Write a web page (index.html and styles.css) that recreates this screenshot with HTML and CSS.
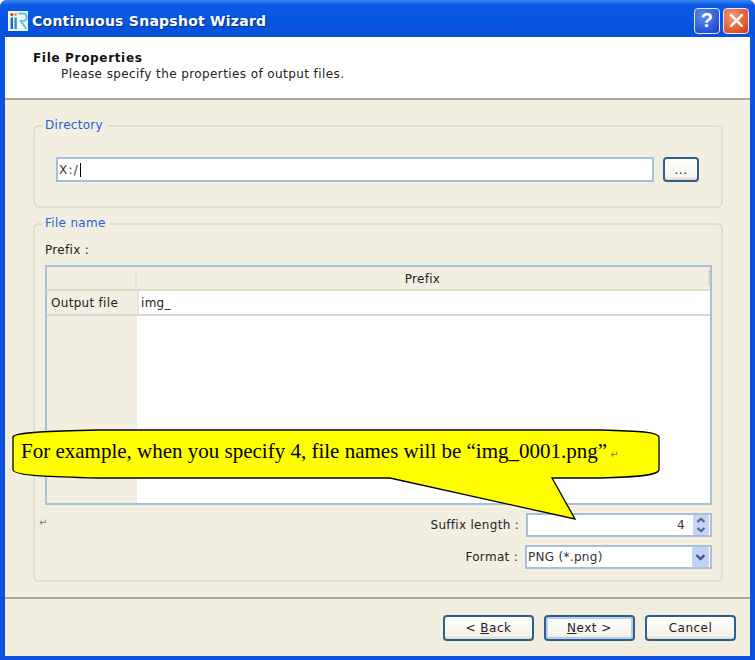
FILE: index.html
```html
<!DOCTYPE html>
<html lang="en">
<head>
<meta charset="utf-8">
<title>Continuous Snapshot Wizard</title>
<link rel="stylesheet" href="styles.css">
</head>
<body>
<div class="window">
  <div class="titlebar">
    <svg class="logo" viewBox="0 0 20 20" width="20" height="20">
      <rect width="20" height="20" fill="#eef8fb"/>
      <circle cx="3.800" cy="3.500" r="1.500" fill="#d8322c"/>
      <rect x="2.600" y="6.500" width="2.400" height="11.500" fill="#24649f"/>
      <circle cx="7.500" cy="3.500" r="1.300" fill="#e8803c"/>
      <rect x="6.400" y="6.500" width="2.400" height="11.500" fill="#2f8fb8"/>
      <path d="M10.500 2.500h4.500a3.800 3.800 0 0 1 .8 7.500h-3l5.700 8" fill="none" stroke="#62c8e0" stroke-width="2"/>
    </svg>
    <span class="title">Continuous Snapshot Wizard</span>
    <span class="caption-btn help">?</span>
    <span class="caption-btn close">
      <svg viewBox="0 0 14 14" width="15" height="15"><path d="M2 2L12 12M12 2L2 12" stroke="#fff" stroke-width="2.400" stroke-linecap="round"/></svg>
    </span>
  </div>
  <div class="client">
    <header class="head">
      <h1 class="head-title">File Properties</h1>
      <p class="head-sub">Please specify the properties of output files.</p>
    </header>
    <main class="body">
      <fieldset class="group group-dir">
        <legend class="legend">Directory</legend>
        <div class="dir-row">
          <div class="field dir-field">X:/<span class="caret"></span></div>
          <button class="btn btn-browse" type="button">...</button>
        </div>
      </fieldset>
      <fieldset class="group group-file">
        <legend class="legend">File name</legend>
        <div class="prefix-label">Prefix :</div>
        <div class="table">
          <div class="t-row t-head">
            <div class="t-side"></div>
            <div class="t-col">Prefix</div>
          </div>
          <div class="t-row t-data">
            <div class="t-side">Output file</div>
            <div class="t-cell">img_</div>
          </div>
          <div class="t-row t-fill">
            <div class="t-side"></div>
            <div class="t-blank"></div>
          </div>
        </div>
        <div class="form-row row-suffix">
          <span class="form-label">Suffix length :</span>
          <div class="field num-field">
            <span class="num-val">4</span>
            <span class="spin">
              <svg viewBox="0 0 16 20" width="16" height="20">
                <rect width="16" height="20" rx="2" fill="#c3d4f7"/>
                <path d="M4.500 7L8 3.800L11.500 7M4.500 13L8 16.200L11.500 13" fill="none" stroke="#4d6185" stroke-width="2"/>
              </svg>
            </span>
          </div>
        </div>
        <div class="form-row row-format">
          <span class="form-label">Format :</span>
          <div class="field sel-field">
            <span class="sel-val">PNG (*.png)</span>
            <span class="drop">
              <svg viewBox="0 0 17 20" width="17" height="20">
                <rect width="17" height="20" rx="2" fill="#c0d2f6"/>
                <path d="M4.500 8L8.500 12L12.500 8" fill="none" stroke="#3f5480" stroke-width="2.400"/>
              </svg>
            </span>
          </div>
        </div>
      </fieldset>
    </main>
    <footer class="foot">
      <button class="btn btn-nav" type="button">&lt; <u>B</u>ack</button>
      <button class="btn btn-nav btn-default" type="button"><u>N</u>ext &gt;</button>
      <button class="btn btn-nav" type="button">Cancel</button>
    </footer>
  </div>
  <span class="para-mark mark-a">↵</span>
  <div class="callout">
    <svg class="callout-shape" viewBox="0 0 660 100" width="660" height="100">
      <path d="M99 9C55 10 14 11 13 16L13 49C14 55 55 56 99 57L390 57L575 98L552 57L600 57C640 56 658 54 659 49L659 16C658 11 640 10 600 9Z" fill="#ffff00" stroke="#000" stroke-width="1.300"/>
    </svg>
    <p class="callout-text">For example, when you specify 4, file names will be “img_0001.png”<span class="para-mark mark-b">↵</span></p>
  </div>
</div>
</body>
</html>
```
FILE: styles.css
```css
* { box-sizing: border-box; }
html, body { margin: 0; padding: 0; }
body { width: 755px; height: 660px; overflow: hidden; background: #fff; font-family: "DejaVu Sans", sans-serif; font-size: 12px; letter-spacing: 0.3px; color: #222; }
.window { position: relative; width: 755px; height: 660px; display: flex; flex-direction: column; background: #0a52e0; border-radius: 7px 7px 0 0; }
.titlebar { height: 37px; flex: none; display: flex; align-items: center; padding: 4px 6px 0 8px; border-radius: 7px 7px 0 0; background: linear-gradient(#3a8af4 0, #0a5ae6 5px, #0556e0 60%, #0a4fd6 100%); }
.logo { flex: none; margin-right: 4px; }
.title { flex: 1; color: #fff; font-weight: 700; font-size: 14px; letter-spacing: 0.25px; text-shadow: 1px 1px 1px #0a2a80; }
.caption-btn { flex: none; width: 26px; height: 26px; margin-left: 3px; border: 1px solid #e4ecfa; border-radius: 4px; display: flex; align-items: center; justify-content: center; color: #fff; font: 700 20px "Liberation Sans", sans-serif; }
.help { background: radial-gradient(circle at 35% 30%, #5d8cf0, #2a55d8 70%, #1b3fb0); }
.close { background: radial-gradient(circle at 35% 30%, #f09a78, #e2592f 65%, #c53a12); }
.client { flex: 1; margin: 0 5px 4px; display: flex; flex-direction: column; background: #f2efe1; min-height: 0; }
.head { height: 63px; flex: none; background: #fff; border-bottom: 2px solid #aca899; padding: 14px 0 0 28px; }
.head-title { margin: 0; font-size: 12px; font-weight: 700; line-height: 15px; color: #111; letter-spacing: 0.67px; }
.head-sub { margin: 1px 0 0 28px; line-height: 15px; font-size: 12px; letter-spacing: 0.41px; }
.body { flex: 1; padding: 18px 27px 0 28px; display: flex; flex-direction: column; gap: 8px; min-height: 0; }
.group { margin: 0; padding: 0 10px; border: 2px solid #e0dfce; border-radius: 6px; min-width: 0; }
.legend { padding: 0 4px 0 2px; margin-left: -2px; color: #2a5cd8; font-size: 12px; line-height: 15px; }
.group-dir { height: 90px; padding-top: 24px; }
.group-file { height: 366px; padding-top: 0; }
.dir-row { display: flex; align-items: center; gap: 9px; padding-left: 11px; padding-right: 13px; }
.field { background: #fff; border: 2px solid #a9bfd6; display: flex; align-items: center; color: #333; }
.dir-field { width: 598px; height: 25px; padding-left: 1px; flex: none; letter-spacing: 1.2px; }
.caret { display: inline-block; width: 1px; height: 14px; background: #000; margin-left: 1px; }
.btn { font-family: "DejaVu Sans", sans-serif; font-size: 12px; letter-spacing: 0.5px; color: #222; padding: 0; background: linear-gradient(#fff, #f4f2ea 85%, #dcd8c8); border: 2px solid #2f5f8c; border-radius: 4px; }
.btn-browse { width: 36px; height: 25px; flex: none; }
.prefix-label { height: 15px; line-height: 15px; margin-top: 12px; }
.table { margin-top: 7px; width: 667px; height: 240px; border: 2px solid #a9bfd6; display: flex; flex-direction: column; }
.t-row { display: flex; }
.t-side { width: 90px; flex: none; background: #f2efe1; padding-left: 4px; display: flex; align-items: center; }
.t-head { height: 24px; background: #f2efe1; border-bottom: 2px solid #dfdbc9; }
.t-head .t-side { border-right: 2px solid #e4e2d6; margin: 3px 0; }
.t-col { flex: 1; text-align: center; border-right: 2px solid #dfdbc9; margin-top: 3px; margin-bottom: 3px; line-height: 19px; }
.t-data { height: 25px; background: #fff; border-bottom: 2px solid #d6d6d6; }
.t-data .t-side { padding-top: 1px; }
.t-cell { flex: 1; padding: 1px 0 0 2px; line-height: 22px; border-left: 2px solid #e8e5d6; }
.t-fill { flex: 1; background: #fff; }
.t-blank { flex: 1; }
.form-row { display: flex; align-items: center; justify-content: flex-end; width: 667px; }
.form-label { margin-right: 7px; }
.row-suffix { margin-top: 8px; height: 24px; }
.row-format { margin-top: 8px; height: 24px; }
.num-field { width: 186px; height: 24px; justify-content: flex-end; padding-right: 1px; }
.num-val { margin-right: 8px; }
.spin { display: flex; }
.sel-field { width: 187px; height: 24px; padding-left: 1px; }
.sel-val { flex: 1; }
.drop { display: flex; margin-right: 1px; }
.foot { height: 59px; flex: none; border-top: 2px solid #aca899; display: flex; justify-content: flex-end; gap: 10px; padding: 16px 14px 0 0; }
.btn-nav { width: 91px; height: 26px; }
.btn-default { box-shadow: inset 0 0 0 2px #b6ccf0; }
.para-mark { font-family: "DejaVu Sans", sans-serif; font-size: 10px; letter-spacing: 0; color: #777; }
.mark-a { position: absolute; left: 39px; top: 517px; }
.mark-b { margin-left: 3px; }
.callout { position: absolute; left: 0; top: 421px; width: 660px; height: 100px; }
.callout-shape { display: block; }
.callout-text { position: absolute; left: 21px; top: 18px; margin: 0; white-space: nowrap; font-family: "Liberation Serif", serif; font-size: 21px; letter-spacing: 0; line-height: 24px; color: #000; }
```
